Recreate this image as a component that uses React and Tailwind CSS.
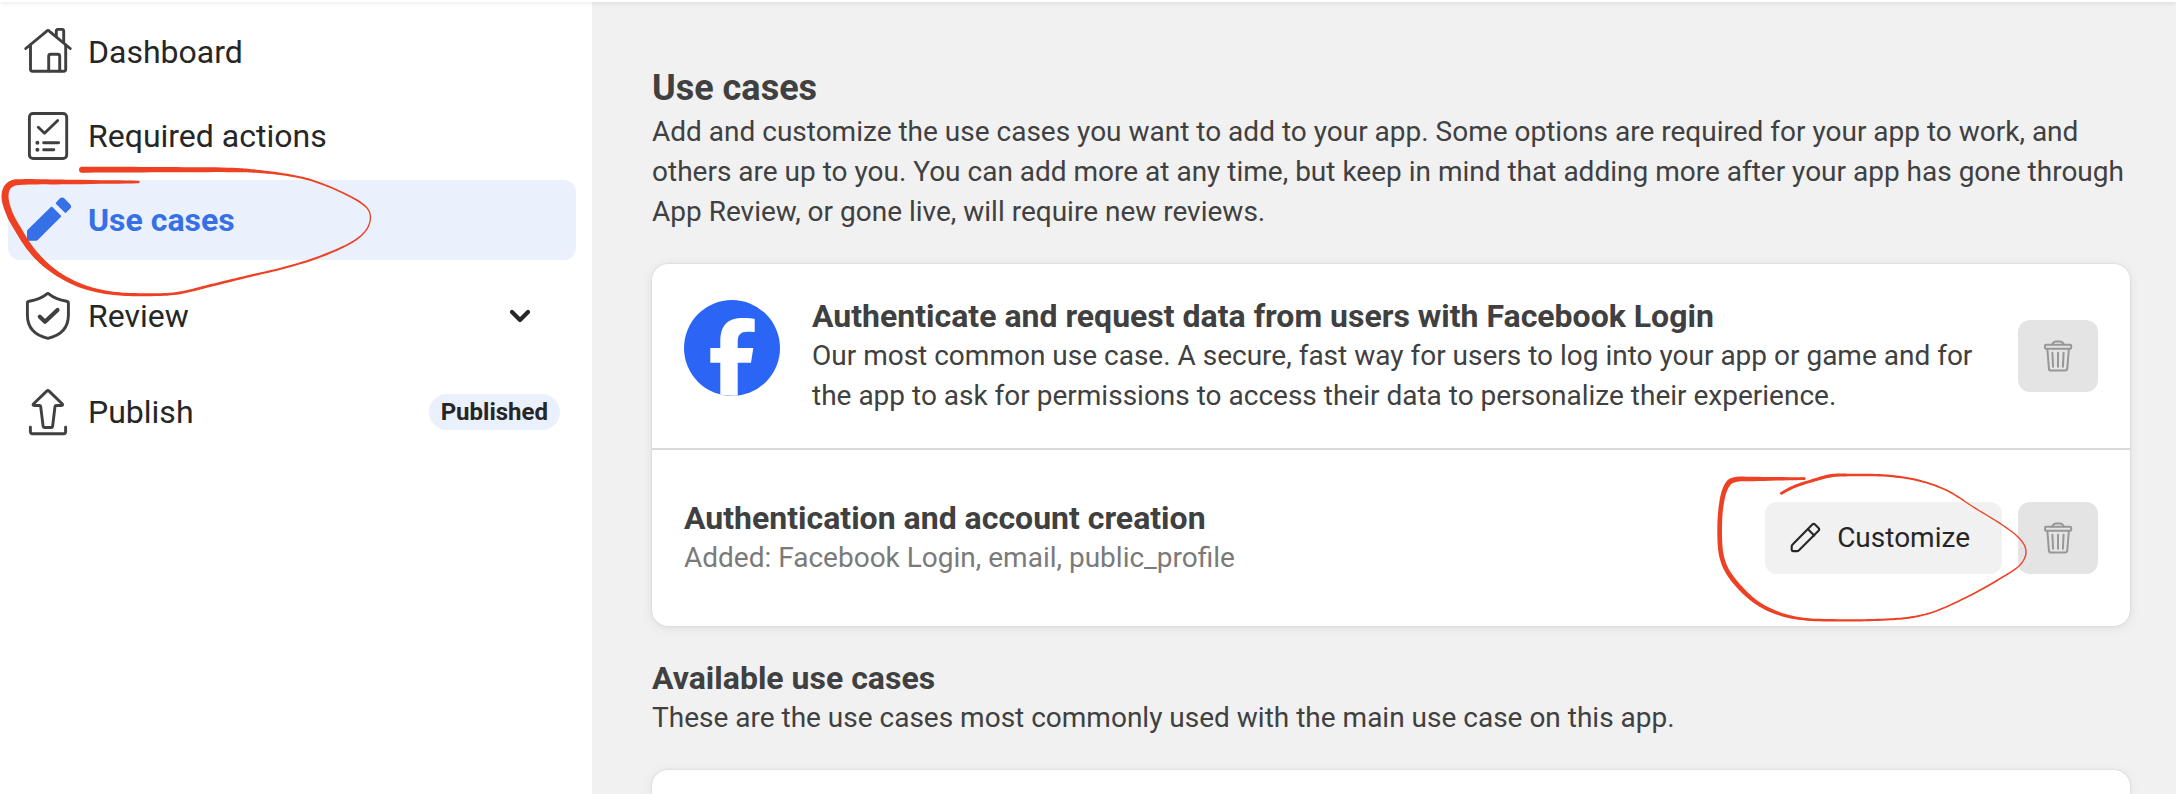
import React from "react";

const ICON_PROPS = {
  fill: "none",
  stroke: "currentColor",
  strokeWidth: 2.9,
  strokeLinecap: "round",
  strokeLinejoin: "round",
  "aria-hidden": true,
};

function HomeIcon() {
  return (
    <svg viewBox="0 0 48 48" className="size-12 shrink-0" {...ICON_PROPS}>
      <path d="M1.800 20.500 22.500 3.300q1.500-1.400 3 0l20.700 17.200" />
      <path d="M6.500 17v24.300a2 2 0 0 0 2 2h31.200a2 2 0 0 0 2-2V17" />
      <path d="M24.700 43V28.300a2 2 0 0 1 2-2h7a2 2 0 0 1 2 2V43" />
      <path d="M32.300 8V3.400a2 2 0 0 1 2-2h3.400a2 2 0 0 1 2 2V14" />
    </svg>
  );
}

function ChecklistIcon() {
  return (
    <svg viewBox="0 0 48 48" className="size-12 shrink-0" {...ICON_PROPS}>
      <rect x="5.4" y="1.5" width="37.3" height="45" rx="3.6" />
      <path d="m14.3 15.3 6.2 6 13.2-12.8M19.6 30.7h15M19.6 37.7h10.2" />
      <circle cx="13.4" cy="30.7" r="2" fill="currentColor" stroke="none" />
      <circle cx="13.4" cy="37.7" r="2" fill="currentColor" stroke="none" />
    </svg>
  );
}

function PencilFilledIcon() {
  return (
    <svg viewBox="0 0 48 48" className="size-12 shrink-0" fill="currentColor" aria-hidden="true">
      <path d="M3 35.6c0-.8.3-1.5.9-2.1L26.9 11.1c.5-.5 1-.5 1.5 0l8.4 8.4c.5.5.5 1 0 1.5L14 43.8c-.6.6-1.2.9-2 .9H4.2c-.7 0-1.2-.5-1.2-1.2z" />
      <path d="M32.1 7.9c-.5-.5-.5-1 0-1.5l3.6-3.8c1.5-1.5 3.3-1.5 4.8 0L46 8.200c1.500 1.500 1.500 3 0 4.500l-3.800 3.800c-.5.5-1 .5-1.500 0z" />
    </svg>
  );
}

function ShieldIcon() {
  return (
    <svg viewBox="0 0 48 48" className="size-12 shrink-0" {...ICON_PROPS}>
      <path d="M22.7 2.100c.7-.8 1.700-.8 2.400 0 5 4 10.400 6 17.500 7.100 1.200.2 1.800.9 1.800 2V23c0 13-8 20.500-20.500 23.300C11.500 43.500 3.400 36 3.400 23V11.200c0-1.100.6-1.800 1.800-2 7.100-1.100 12.500-3.100 17.500-7.100z" />
      <path d="m15.800 24.800 5.200 5 12.500-11.800" strokeWidth="4.2" />
    </svg>
  );
}

function PublishIcon() {
  return (
    <svg viewBox="0 0 48 48" className="size-12 shrink-0" {...ICON_PROPS}>
      <path d="M23 2.900c.6-.6 1.200-.6 1.800 0l13.300 12.900c.9.900.6 1.700-.6 1.700h-5.200c-.8 0-1.200.3-1.300 1.100l-2.400 19.600c-.1.900-.5 1.300-1.300 1.300h-6.900c-.8 0-1.200-.4-1.300-1.300l-2.400-19.600c-.1-.8-.5-1.100-1.300-1.100h-5.200c-1.200 0-1.500-.8-.6-1.700z" />
      <path d="M6.400 39.300v4.400a2 2 0 0 0 2 2h31.200a2 2 0 0 0 2-2v-4.400" />
    </svg>
  );
}

function ChevronIcon() {
  return (
    <svg viewBox="0 0 32 32" className="mr-6 size-8 shrink-0 text-[#262626]" {...ICON_PROPS} strokeWidth="4.2">
      <path d="m8 12 8 8 8-8" />
    </svg>
  );
}

function PencilIcon() {
  return (
    <svg viewBox="0 0 32 32" className="size-8 shrink-0" {...ICON_PROPS} strokeWidth="2.1">
      <path d="M2.700 24.500c0-.9.300-1.500.9-2.100L23.300 2.600c.9-.9 1.800-.9 2.700 0l3.500 3.500c.9.900.9 1.800 0 2.700L10 28.200c-.6.600-1.200.9-2.100.9H4c-.8 0-1.300-.5-1.300-1.300z" />
      <path d="m19 7.200 6.200 6.200" />
    </svg>
  );
}

function TrashIcon() {
  return (
    <svg viewBox="0 0 32 32" className="size-8 shrink-0" {...ICON_PROPS} strokeWidth="2">
      <rect x="3" y="4.800" width="26.200" height="4" rx="1" />
      <path d="M10 4.500c1-1.600 1.900-3 3.500-3h5c1.600 0 2.500 1.400 3.500 3" />
      <path d="m5.400 9.500 1.500 18.800c.1 1.500 1 2.300 2.400 2.300h13.600c1.400 0 2.300-.8 2.400-2.300l1.500-18.800" />
      <path d="m10.400 12.800.7 14M16 12.800v14M21.600 12.800l-.7 14" />
    </svg>
  );
}

function FacebookLogo() {
  return (
    <svg viewBox="0 0 96 96" className="mt-1 size-24 shrink-0 self-start" role="img" aria-label="Facebook">
      <circle cx="48" cy="48" r="48" fill="#2b65f6" />
      <path
        fill="#fff"
        d="M36.300 94.500V62.700H26.300V48h10v-6c0-17 7.200-24 23-24 4 0 9 .4 11.400 1v13c-1.700-.2-4.200-.3-7-.3-7 0-10 3-10 10.300v6h15.600L67 62.700H53.700v33q-9 .6-17.400-1.200z"
      />
    </svg>
  );
}

// marker strokes as [x, y, width]
const NAV_STROKE = [
  [246, 59, 18], [480, 59, 16], [700, 60, 13], [760, 63, 10], [850, 73, 7], [925, 88, 6],
  [1010, 120, 5], [1085, 160, 5], [1107, 183, 4], [1111, 207, 4], [1100, 238, 4], [1065, 271, 5],
  [960, 320, 6], [850, 354, 6], [740, 380, 7], [630, 407, 8], [530, 430, 8], [435, 434, 9],
  [340, 430, 10], [250, 410, 12], [180, 376, 14], [130, 338, 17], [90, 294, 19], [55, 240, 20],
  [28, 190, 20], [15, 140, 21], [22, 112, 20], [40, 99, 19], [65, 96, 17], [200, 96, 14], [415, 96, 8],
];

const BUTTON_STROKE = [
  [244, 130, 8], [280, 111, 9], [330, 94, 9], [395, 77, 10], [450, 75, 8], [560, 77, 7],
  [650, 90, 6], [740, 121, 5], [820, 171, 4], [910, 227, 4], [955, 262, 4], [975, 290, 4],
  [977, 315, 4], [960, 345, 4], [900, 386, 5], [795, 444, 5], [700, 486, 5], [640, 501, 6],
  [570, 508, 6], [440, 511, 7], [310, 507, 8], [240, 492, 10], [175, 461, 12], [120, 413, 14],
  [80, 360, 14], [64, 315, 14], [59, 250, 14], [63, 170, 14], [75, 118, 15], [90, 95, 16],
  [110, 88, 15], [160, 87, 13], [313, 86, 8],
];

// centripetal Catmull-Rom between p1 and p2
function spline(p0, p1, p2, p3, u) {
  const step = (a, b) => Math.sqrt(Math.hypot(b[0] - a[0], b[1] - a[1])) || 1;
  const t1 = step(p0, p1);
  const t2 = t1 + step(p1, p2);
  const t3 = t2 + step(p2, p3);
  const t = t1 + (t2 - t1) * u;
  const mix = (a, b, ta, tb) => a.map((v, i) => (v * (tb - t) + b[i] * (t - ta)) / (tb - ta));
  const a1 = mix(p0, p1, 0, t1);
  const a2 = mix(p1, p2, t1, t2);
  const a3 = mix(p2, p3, t2, t3);
  return mix(mix(a1, a2, 0, t2), mix(a2, a3, t1, t3), t1, t2);
}

// outline of a stroke whose width changes along the way
function brushPath(points) {
  const line = [];
  for (let i = 0; i < points.length - 1; i++) {
    for (let k = 0; k < 10; k++) {
      line.push(spline(points[i - 1] || points[i], points[i], points[i + 1], points[i + 2] || points[i + 1], k / 10));
    }
  }
  line.push(points[points.length - 1]);

  const left = [];
  const right = [];
  line.forEach(([x, y, w], i) => {
    const a = line[Math.max(i - 1, 0)];
    const b = line[Math.min(i + 1, line.length - 1)];
    const len = Math.hypot(b[0] - a[0], b[1] - a[1]) || 1;
    const nx = (-(b[1] - a[1]) / len) * (w / 2);
    const ny = ((b[0] - a[0]) / len) * (w / 2);
    left.push(`${(x + nx).toFixed(1)} ${(y + ny).toFixed(1)}`);
    right.unshift(`${(x - nx).toFixed(1)} ${(y - ny).toFixed(1)}`);
  });
  return `M${left.join("L")}L${right.join("L")}Z`;
}

function MarkerLoop({ points, viewBox, className }) {
  const [x, y, w] = points[0];
  const [endX, endY, endW] = points[points.length - 1];
  return (
    <svg viewBox={viewBox} className={className} fill="#ee4023" aria-hidden="true">
      <path d={brushPath(points)} />
      <circle cx={x} cy={y} r={w / 2} />
      <circle cx={endX} cy={endY} r={endW / 2} />
    </svg>
  );
}

function NavItem({ icon, label, active, children }) {
  return (
    <li className="relative">
      <a
        href="#"
        aria-current={active ? "page" : undefined}
        className={
          active
            ? "flex h-20 items-center gap-4 rounded-xl bg-[#ebf0fd] px-4 font-bold text-[#3670e6]"
            : "flex h-20 items-center gap-4 rounded-xl px-4 text-[#404040]"
        }
      >
        {icon}
        <span className={active ? "flex-1" : "flex-1 text-[#262626]"}>{label}</span>
        {children}
      </a>
      {active && (
        <MarkerLoop
          points={NAV_STROKE}
          viewBox="0 0 1200 480"
          className="pointer-events-none absolute -top-[30px] -left-2 z-10 h-40 w-[400px]"
        />
      )}
    </li>
  );
}

function DeleteButton({ label }) {
  return (
    <button
      type="button"
      aria-label={label}
      className="flex h-[72px] w-20 shrink-0 items-center justify-center rounded-xl bg-[#e4e4e4] text-[#979797]"
    >
      <TrashIcon />
    </button>
  );
}

export default function App() {
  return (
    <div className="flex h-screen flex-col overflow-hidden bg-[#f1f1f1] font-['Roboto',sans-serif] text-[28px] leading-10 text-[#404040]">
      <header className="relative z-20 h-0.5 shrink-0 bg-white shadow-[0_1px_4px_rgba(0,0,0,0.15)]" />

      <div className="flex min-h-0 flex-1">
        <nav className="w-[592px] shrink-0 bg-white pt-2.5 pr-4 pl-2 text-[32px]">
          <ul className="flex flex-col gap-1">
            <NavItem icon={<HomeIcon />} label="Dashboard" />
            <NavItem icon={<ChecklistIcon />} label="Required actions" />
            <NavItem icon={<PencilFilledIcon />} label="Use cases" active />
          </ul>
          <ul className="mt-4 flex flex-col gap-4">
            <NavItem icon={<ShieldIcon />} label="Review">
              <ChevronIcon />
            </NavItem>
            <NavItem icon={<PublishIcon />} label="Publish">
              <span className="rounded-full bg-[#ebf0fd] px-3 text-2xl leading-9 font-bold text-[#262626]">
                Published
              </span>
            </NavItem>
          </ul>
        </nav>

        <main className="flex min-w-0 flex-1 flex-col gap-8 pt-[62px] pr-[46px] pl-[60px]">
          <div>
            <h1 className="text-4xl leading-12 font-bold">Use cases</h1>
            <p>
              Add and customize the use cases you want to add to your app. Some options are required for your app to
              work, and others are up to you. You can add more at any time, but keep in mind that adding more after
              your app has gone through App Review, or gone live, will require new reviews.
            </p>
          </div>

          <section className="divide-y-2 divide-[#d9d9d9] rounded-2xl bg-white shadow-[0_0_2px_rgba(0,0,0,0.15),0_2px_12px_rgba(0,0,0,0.08)]">
            <div className="flex items-center gap-8 p-8">
              <FacebookLogo />
              <div className="min-w-0 flex-1">
                <h2 className="text-[32px] font-bold">Authenticate and request data from users with Facebook Login</h2>
                <p>
                  Our most common use case. A secure, fast way for users to log into your app or game and for the app
                  to ask for permissions to access their data to personalize their experience.
                </p>
              </div>
              <DeleteButton label="Remove Facebook Login use case" />
            </div>

            <div className="flex items-center gap-8 px-8 py-12">
              <div className="min-w-0 flex-1">
                <h2 className="text-[32px] font-bold">Authentication and account creation</h2>
                <p className="text-[#7a7a7a]">Added: Facebook Login, email, public_profile</p>
              </div>
              <div className="relative flex gap-4">
                <button
                  type="button"
                  className="flex h-[72px] items-center gap-4 rounded-xl bg-[#f1f1f1] pr-8 pl-6 text-[#262626]"
                >
                  <PencilIcon />
                  Customize
                </button>
                <DeleteButton label="Remove authentication use case" />
                <MarkerLoop
                  points={BUTTON_STROKE}
                  viewBox="0 0 999 600"
                  className="pointer-events-none absolute -top-[52px] right-[65px] z-10 h-[200px] w-[333px]"
                />
              </div>
            </div>
          </section>

          <div>
            <h2 className="text-[32px] font-bold">Available use cases</h2>
            <p>These are the use cases most commonly used with the main use case on this app.</p>
          </div>

          <section className="flex-1 rounded-t-2xl bg-white shadow-[0_0_2px_rgba(0,0,0,0.15),0_2px_12px_rgba(0,0,0,0.08)]" />
        </main>
      </div>
    </div>
  );
}
